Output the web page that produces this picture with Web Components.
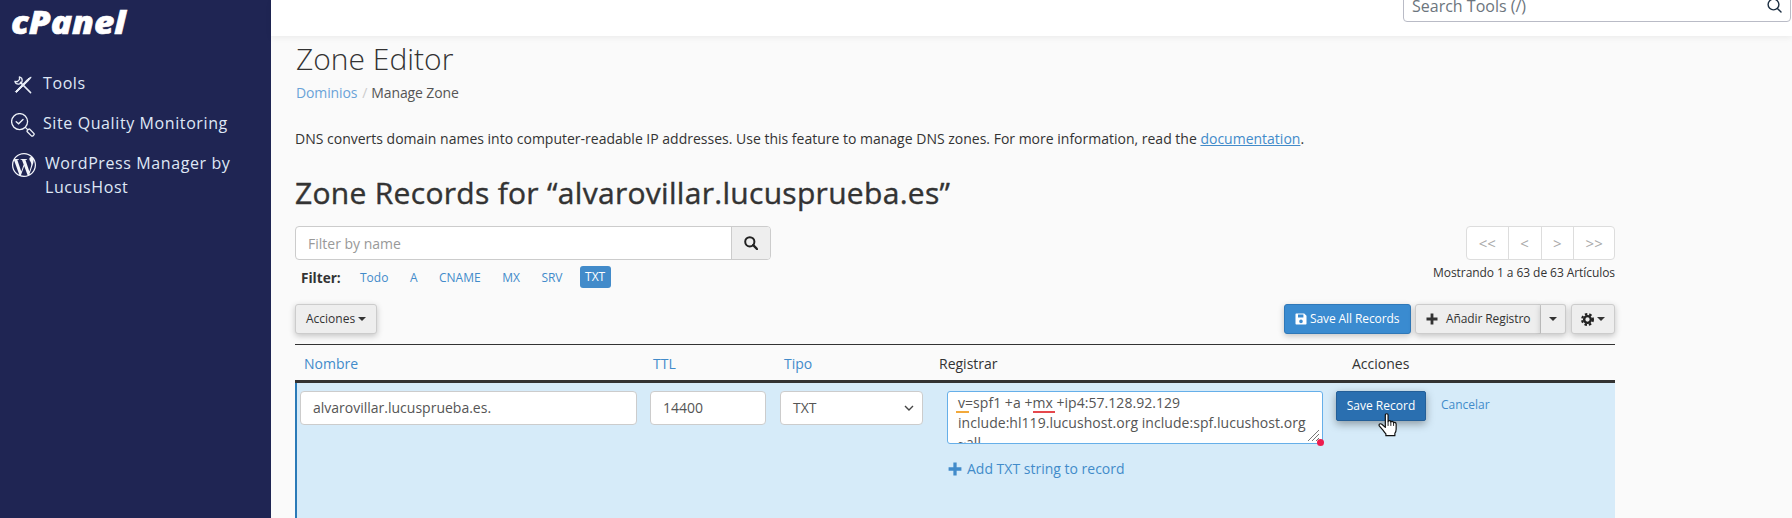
<!DOCTYPE html>
<html>
<head>
<meta charset="utf-8">
<title>Zone Editor</title>
<style>
  html, body {margin: 0; height: 100%; overflow: hidden;}
  body {font-family: "Open Sans", sans-serif; font-size: 14px; color: #333; background: #fafafa;}
  cp-app {height: 518px;}
</style>
</head>
<body>
<cp-app>
  <cp-sidebar slot="side">
    <cp-nav-item text="Tools" icon="tools"></cp-nav-item>
    <cp-nav-item text="Site Quality Monitoring" icon="quality"></cp-nav-item>
    <cp-nav-item text="WordPress Manager by LucusHost" icon="wp"></cp-nav-item>
  </cp-sidebar>
  <cp-topbar slot="top"></cp-topbar>
  <zone-intro></zone-intro>
  <zone-controls></zone-controls>
  <zone-table></zone-table>
</cp-app>

<script>
const ICONS = {
  tools: `<svg width="18" height="18" viewBox="0 0 18 18" fill="none" stroke="#e8edf6" stroke-width="1.5" stroke-linecap="round" stroke-linejoin="round">
    <path d="M16.8 1.2 L14 2.8 L1.4 15.6 L2.4 16.6 L15.2 4 Z" stroke-width="1" fill="#e8edf6"/>
    <path d="M6.4 6.4 L16.6 16.6"/><path d="M5.4 .9 A3.7 3.7 0 1 1 .9 5.4 L3.4 5.6 L5.6 3.4 Z" stroke-width="1.3"/></svg>`,
  quality: `<svg width="24" height="24" viewBox="0 0 24 24" fill="none" stroke="#eef2f8" stroke-width="1.3" stroke-linecap="round">
    <circle cx="8.6" cy="8.6" r="8"/><path d="M5.2 8.8 L7.6 10.8 L12 6.6" stroke-width="1.4"/>
    <path d="M14.6 14.6 L16.4 16.4"/><path d="M16.2 17.6 L17.6 16.2 Q18.2 15.8 18.8 16.3 L23 20.6 Q23.4 21.4 22.9 21.9 L21.9 22.9 Q21 23.5 20.4 22.9 L16.3 18.8 Q15.8 18.2 16.2 17.6Z"/></svg>`,
  wp: `<svg width="24" height="24" viewBox="0 0 24 24"><path fill="#f3f5fa" d="M21.469 6.825c.84 1.537 1.318 3.3 1.318 5.175 0 3.979-2.156 7.456-5.363 9.325l3.295-9.527c.615-1.54.82-2.771.82-3.864 0-.405-.026-.78-.07-1.11m-7.981.105c.647-.03 1.232-.105 1.232-.105.582-.075.514-.93-.067-.899 0 0-1.755.135-2.88.135-1.064 0-2.85-.15-2.85-.15-.585-.03-.661.855-.075.885 0 0 .54.061 1.125.09l1.68 4.605-2.37 7.08L5.354 6.9c.649-.03 1.234-.1 1.234-.1.585-.075.516-.93-.065-.896 0 0-1.746.138-2.874.138-.2 0-.438-.008-.69-.015C4.911 3.15 8.235 1.215 12 1.215c2.809 0 5.365 1.072 7.286 2.833-.046-.003-.091-.009-.141-.009-1.06 0-1.812.923-1.812 1.914 0 .89.513 1.643 1.06 2.531.411.72.89 1.643.89 2.977 0 .915-.354 1.994-.821 3.479l-1.075 3.585-3.9-11.61.001.014zM12 22.784c-1.059 0-2.081-.153-3.048-.437l3.237-9.406 3.315 9.087c.024.053.05.101.078.149-1.12.393-2.325.609-3.582.609M1.211 12c0-1.564.336-3.05.935-4.39L7.29 21.709C3.694 19.96 1.212 16.271 1.211 12M12 0C5.385 0 0 5.385 0 12s5.385 12 12 12 12-5.385 12-12S18.615 0 12 0"/></svg>`,
  search: `<svg width="14" height="14" viewBox="0 0 14 14" fill="none" stroke="#222" stroke-width="2"><circle cx="5.8" cy="5.8" r="4.6"/><path d="M9.2 9.2 L13 13" stroke-linecap="round" stroke-width="2.4"/></svg>`,
  searchThin: `<svg width="15" height="15" viewBox="0 0 15 15" fill="none" stroke="#1d2f42" stroke-width="1.4"><circle cx="6.5" cy="6.5" r="5.4"/><path d="M10.4 10.4 L14 14" stroke-linecap="round"/></svg>`,
  save: `<svg width="12" height="12" viewBox="0 0 12 12"><path fill="#fff" fill-rule="evenodd" d="M1.2 0.5 H9.2 L11.5 2.8 V10.8 Q11.5 11.5 10.8 11.5 H1.2 Q0.5 11.5 0.5 10.8 V1.2 Q0.5 0.5 1.2 0.5Z M3 1.5 V4.4 H8.4 V1.5Z M6 6.6 A1.8 1.8 0 1 0 6 10.2 A1.8 1.8 0 1 0 6 6.6Z"/></svg>`,
  plus: `<svg width="12" height="12" viewBox="0 0 12 12"><path fill="currentColor" d="M4.6 0.5 H7.4 V4.6 H11.5 V7.4 H7.4 V11.5 H4.6 V7.4 H0.5 V4.6 H4.6Z"/></svg>`,
  gear: `<svg width="13" height="13" viewBox="0 0 14 14" fill="none" stroke="#222"><circle cx="7" cy="7" r="3.6" stroke-width="2.6"/><circle cx="7" cy="7" r="5.8" stroke-width="2.4" stroke-dasharray="2.6 2.16"/></svg>`,
  hand: `<svg width="22" height="24" viewBox="0 0 24 26"><path fill="#fff" stroke="#111" stroke-width="1.3" stroke-linejoin="round" d="M8 2.2 Q8 .7 9.5 .7 Q11 .7 11 2.2 V9.4 Q11.2 8.2 12.5 8.3 Q13.9 8.4 14 9.8 Q14.3 8.8 15.5 9 Q16.8 9.2 17 10.6 Q17.5 9.9 18.5 10.2 Q19.8 10.6 19.8 12.2 V17.5 Q19.8 20 18.4 22 V24.6 H8.6 V22.6 Q7 21 5.4 18.6 L1.6 14.2 Q.6 12.8 1.8 12 Q3 11.2 4.2 12.2 L8 15.6Z"/><path stroke="#111" stroke-width="1" d="M11 9.4 V14 M14 9.8 V14 M17 10.6 V14"/></svg>`
};
const caret = `<i style="display:inline-block;width:0;height:0;border:4px solid transparent;border-top-color:currentColor;border-bottom:0;vertical-align:middle"></i>`;

customElements.define('cp-app', class extends HTMLElement {
  constructor(){
    super();
    this.attachShadow({mode: 'open'}).innerHTML = `
    <style>
      :host {display: flex; overflow: hidden;}
      .main {flex: 1; min-width: 0; display: flex; flex-direction: column;}
      .content {flex: 1; min-height: 0; display: flex; flex-direction: column; padding: 0 177px 0 24px;}
    </style>
    <slot name="side"></slot>
    <div class="main">
      <slot name="top"></slot>
      <div class="content"><slot></slot></div>
    </div>`;
  }
});

customElements.define('cp-sidebar', class extends HTMLElement {
  constructor(){
    super();
    this.attachShadow({mode: 'open'}).innerHTML = `
    <style>
      :host {display: block; width: 271px; flex: none; background: #1f2553; box-sizing: border-box;}
      .logo {height: 71px; padding-left: 11px; color: #fff; font: italic 800 32px/44px "Open Sans", sans-serif; -webkit-text-stroke: .6px #fff;}
      .logo span {display: inline-block; transform: scaleX(1.1); transform-origin: left;}
      nav {display: flex; flex-direction: column; gap: 16px;}
    </style>
    <div class="logo"><span>cPanel</span></div>
    <nav><slot></slot></nav>`;
  }
});

customElements.define('cp-nav-item', class extends HTMLElement {
  constructor(){
    super();
    const name = this.getAttribute('icon');
    const wp = name == 'wp';
    const quality = name == 'quality';
    this.attachShadow({mode: 'open'}).innerHTML = `
    <style>
      :host {display: flex; align-items: flex-start; padding-left: ${wp ? 12 : quality ? 11 : 14}px; color: #dfe8f6; font-size: 16px; line-height: 24px; letter-spacing: .6px;}
      .ic {flex: none; display: flex; align-items: flex-start; width: ${wp ? 33 : quality ? 32 : 29}px; height: 19px; margin-top: ${name == 'tools' ? 5 : 2}px;}
      .tx {width: ${wp ? 190 : 225}px;}
    </style>
    <span class="ic">${ICONS[name]}</span>
    <span class="tx">${this.getAttribute('text')}</span>`;
  }
});

customElements.define('cp-topbar', class extends HTMLElement {
  constructor(){
    super();
    this.attachShadow({mode: 'open'}).innerHTML = `
    <style>
      :host {display: flex; flex: none; height: 36px; box-sizing: border-box; justify-content: flex-end; align-items: flex-end; padding: 0 1px 14px 0; background: #fff; box-shadow: 0 2px 6px rgba(0,0,0,.06); position: relative; overflow: hidden;}
      .box {flex: none; width: 388px; height: 38px; box-sizing: border-box; border: 1px solid #b9bbc6; border-radius: 4px; display: flex; align-items: flex-end; justify-content: space-between; padding: 0 8px 4px 8px; color: #6c757d; font-size: 16px; line-height: 22px;}
      svg {display: block; margin-bottom: 4px;}
    </style>
    <div class="box"><span>Search Tools (/)</span>${ICONS.searchThin}</div>`;
  }
});

customElements.define('zone-intro', class extends HTMLElement {
  constructor(){
    super();
    this.attachShadow({mode: 'open'}).innerHTML = `
    <style>
      :host {display: block; flex: none;}
      h1 {margin: 5px 0 0 1px; font-size: 30px; line-height: 36px; font-weight: 300; color: #333;}
      .crumb {margin: 6px 0 0 1px; line-height: 20px; color: #555; display: flex; letter-spacing: -.12px;}
      a {color: #428bca; text-decoration: none;}
      .crumb a {color: #6aa3d8;}
      .sep {color: #ccc; margin: 0 4px 0 5px;}
      p {margin: 26px 0 0 0; line-height: 20px; color: #333; font-size: 14px;}
      p a {text-decoration: underline;}
      h2 {margin: 26px 0 0 0; font-size: 30px; line-height: 36px; font-weight: 400; letter-spacing: .3px; -webkit-text-stroke: .4px #333; color: #333;}
    </style>
    <h1>Zone Editor</h1>
    <div class="crumb"><a>Dominios</a><span class="sep">/</span><span>Manage Zone</span></div>
    <p>DNS converts domain names into computer-readable IP addresses. Use this feature to manage DNS zones. For more information, read the <a>documentation</a>.</p>
    <h2>Zone Records for “alvarovillar.lucusprueba.es”</h2>`;
  }
});

customElements.define('zone-controls', class extends HTMLElement {
  constructor(){
    super();
    this.attachShadow({mode: 'open'}).innerHTML = `
    <style>
      :host {display: block; flex: none; padding-top: 15px;}
      * {box-sizing: border-box;}
      .top {display: flex; justify-content: space-between; height: 78px;}
      .search {display: flex; width: 476px; height: 34px; border: 1px solid #ccc; border-radius: 4px; overflow: hidden; background: #fff;}
      .search span {flex: 1; padding: 0 12px; line-height: 33px; color: #999;}
      .search b {flex: none; width: 39px; background: #eee; border-left: 1px solid #ccc; display: flex; align-items: center; justify-content: center;}
      .filter {display: flex; align-items: center; height: 22px; margin-top: 6px; padding-left: 6px; font-size: 12px; color: #428bca;}
      .filter strong {color: #333; font-size: 13.6px; width: 59px;}
      .filter span {margin-right: 21.5px;}
      .filter span.on {margin: 0 0 0 -4.5px; height: 22px; line-height: 22px; padding: 0 5.5px; background: #428bca; color: #fff; border-radius: 3px;}
      .pager {display: flex; justify-content: flex-end; height: 34px;}
      .pager div {display: flex; border: 1px solid #ddd; border-radius: 4px; background: #fff; color: #aaa; font-size: 15px; width: 149px;}
      .pager span {display: flex; align-items: center; justify-content: center; border-left: 1px solid #ddd; flex: 1 1 33px;}
      .pager span:first-child {border: 0; flex: 1 1 41px;}
      .pager span:last-child {flex: 1 1 41px;}
      .count {text-align: right; font-size: 12px; line-height: 16px; margin-top: 5px; color: #333; letter-spacing: -.07px;}
      .bar {display: flex; justify-content: space-between; height: 30px;}
      .group {display: flex;}
      .btn {height: 30px; border: 1px solid #ccc; border-radius: 3px; background: #eee; font-size: 12px; line-height: 28px; padding: 0 10px; color: #333; box-shadow: 0 2px 6px rgba(0,0,0,.22); display: flex; align-items: center; gap: 3px; white-space: nowrap;}
      .blue {background: #3a8bd0; border-color: #2f78b8; color: #fff; width: 127px; margin-right: 4px; padding-right: 0; letter-spacing: -.1px;}
      .add {width: 126px; border-radius: 3px 0 0 3px; border-right: 1px solid #ccc; gap: 8px; padding-left: 10px; padding-right: 0; letter-spacing: -.1px;}
      .split {width: 25px; border-left: 0; border-radius: 0 3px 3px 0; justify-content: center; padding: 0; margin-right: 5px;}
      .gear {width: 44px; justify-content: center; padding: 0;}
      .rule {height: 1px; margin: 10px 0 1px; background: #333;}
    </style>
    <div class="top">
      <div>
        <div class="search"><span>Filter by name</span><b>${ICONS.search}</b></div>
        <div class="filter"><strong>Filter:</strong><span>Todo</span><span>A</span><span>CNAME</span><span>MX</span><span>SRV</span><span class="on">TXT</span></div>
      </div>
      <div>
        <div class="pager"><div><span>&lt;&lt;</span><span>&lt;</span><span>&gt;</span><span>&gt;&gt;</span></div></div>
        <div class="count">Mostrando 1 a 63 de 63 Artículos</div>
      </div>
    </div>
    <div class="bar">
      <div class="btn">Acciones ${caret}</div>
      <div class="group">
        <div class="btn blue">${ICONS.save}Save All Records</div>
        <div class="btn add">${ICONS.plus}Añadir Registro</div>
        <div class="btn split">${caret}</div>
        <div class="btn gear">${ICONS.gear}${caret}</div>
      </div>
    </div>
    <div class="rule"></div>`;
  }
});

customElements.define('zone-table', class extends HTMLElement {
  constructor(){
    super();
    this.attachShadow({mode: 'open'}).innerHTML = `
    <style>
      :host {display: flex; flex-direction: column; flex: 1; min-height: 0; position: relative;}
      * {box-sizing: border-box;}
      .head, .row {display: grid;}
      .head {grid-template-columns: 349px 131px 155px 400px 285px; height: 37px; align-items: center; border-bottom: 3px solid #333; padding-top: 1px; color: #428bca; line-height: 20px;}
      .head > div:nth-child(n+4) {color: #333;}
      .row {grid-template-columns: 347px 131px 155px 400px 285px; flex: 1; background: #d6ebf9; border-left: 2px solid #2a7ab8; padding-top: 8px;}
      .field {height: 34px; border: 1px solid #ccc; border-radius: 4px; background: #fff; color: #555; line-height: 32px; padding: 0 12px;}
      .sel {display: flex; justify-content: space-between; align-items: center; padding-right: 8px;}
      .area {position: relative; width: 376px; height: 53px; border: 1px solid #66afe9; border-radius: 3px; background: #fff; overflow: hidden; padding: 1px 10px; color: #555; line-height: 20px; font-size: 14px; letter-spacing: .04px;}
      .mark {position: absolute; height: 2px; top: 19px;}
      .grip {position: absolute; right: 2px; bottom: 1px;}
      .dot {position: absolute; width: 7px; height: 7px; border-radius: 50%; background: #ee1c4e; left: 370px; top: 48px;}
      .wrap {position: relative;}
      .add {display: flex; align-items: center; gap: 5px; margin: 15px 0 0 1px; color: #428bca; line-height: 20px;}
      .add svg {width: 14px; height: 14px;}
      .act {display: flex; align-items: flex-start;}
      .save {width: 90px; height: 30px; background: #2a6fb0; border: 1px solid #245f98; border-radius: 2px; color: #fff; font-size: 12px; line-height: 28px; text-align: center; box-shadow: 0 3px 9px rgba(0,0,0,.35);}
      .cancel {color: #428bca; font-size: 12px; line-height: 28px; margin-left: 15px;}
      .hand {position: absolute; left: 1083px; top: 67px; line-height: 0;}
    </style>
    <div class="head">
      <div style="padding-left:9px">Nombre</div>
      <div style="padding-left:9px">TTL</div>
      <div style="padding-left:9px">Tipo</div>
      <div style="padding-left:9px">Registrar</div>
      <div style="padding-left:22px">Acciones</div>
    </div>
    <div class="row">
      <div style="padding:0 7px 0 3px"><div class="field">alvarovillar.lucusprueba.es.</div></div>
      <div style="padding:0 9px 0 6px"><div class="field">14400</div></div>
      <div style="padding:0 7px 0 5px"><div class="field sel">TXT<svg width="10" height="6" viewBox="0 0 10 6" fill="none" stroke="#444" stroke-width="1.4"><path d="M1 1 L5 5 L9 1"/></svg></div></div>
      <div style="padding-left:17px">
        <div class="wrap">
          <div class="area">v=spf1 +a +mx +ip4:57.128.92.129 include:hl119.lucushost.org include:spf.lucushost.org ~all
            <i class="mark" style="left:8px;width:13px;background:#f2a93b"></i>
            <i class="mark" style="left:85px;width:22px;background:#e5484d"></i>
            <svg class="grip" width="13" height="13" viewBox="0 0 13 13" stroke="#777" stroke-width="1"><path d="M1 12 L12 1 M5 12 L12 5 M9 12 L12 9"/></svg>
          </div>
          <i class="dot"></i>
        </div>
        <div class="add">${ICONS.plus}<span>Add TXT string to record</span></div>
      </div>
      <div class="act" style="padding-left:6px"><div class="save">Save Record</div><div class="cancel">Cancelar</div></div>
    </div>
    <div class="hand">${ICONS.hand}</div>`;
  }
});
</script>
</body>
</html>
